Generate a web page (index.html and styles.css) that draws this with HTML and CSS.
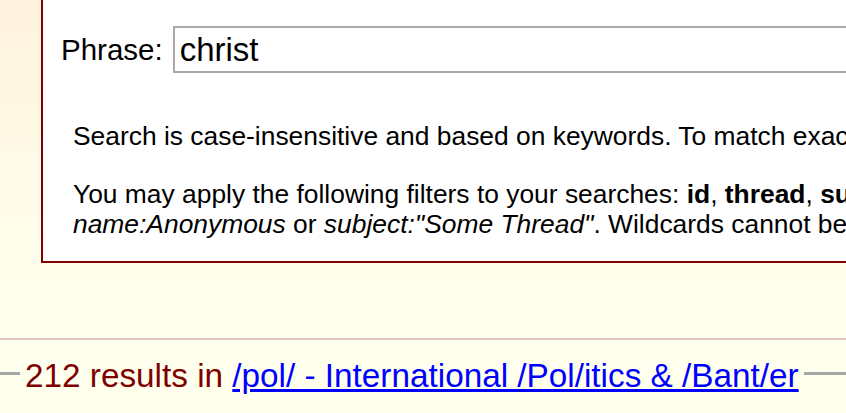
FILE: index.html
```html
<!DOCTYPE html>
<html lang="en">
<head>
<meta charset="utf-8">
<title>Search</title>
<link rel="stylesheet" href="styles.css">
</head>
<body>
<div class="page">
  <div class="search-box">
    <div class="phrase-row">
      <label class="phrase-label" for="q">Phrase:</label>
      <input class="phrase-input" id="q" type="text" value="christ">
    </div>
    <div class="help">
      <p>Search is case-insensitive and based on keywords. To match exact phrases, put them in double quotes.</p>
      <p>You may apply the following filters to your searches: <b>id</b>, <b>thread</b>, <b>subject</b>, <b>name</b>, <b>trip</b>. Example:<br><i>name:Anonymous</i> or <i>subject:"Some Thread"</i>. Wildcards cannot be used in filters.</p>
    </div>
  </div>
  <hr class="divider">
  <h2 class="results-title">
    <span class="rule rule-left"></span>
    <span class="results-text">212 results in <a href="#">/pol/ - International /Pol/itics &amp; /Bant/er</a></span>
    <span class="rule rule-right"></span>
  </h2>
</div>
</body>
</html>
```

FILE: styles.css
```css
html, body {
  margin: 0;
  padding: 0;
}

body {
  background: #ffffee linear-gradient(#fff3de 0, #fffbe9 200px, #ffffee 290px) no-repeat;
  font-family: "Liberation Sans", Arial, sans-serif;
  color: #000;
  overflow: hidden;
  height: 413px;
}

.page {
  width: 846px;
}

.search-box {
  margin: -20px 0 0 41px;
  width: 1600px;
  background: #fff;
  border: 2px solid #800000;
  padding: 44px 0 0 0;
}

.phrase-row {
  display: flex;
  align-items: center;
  gap: 10px;
  padding-left: 18px;
}

.phrase-label {
  font-size: 29.5px;
}

.phrase-input {
  font-family: "Liberation Sans", Arial, sans-serif;
  font-size: 33px;
  width: 1200px;
  height: 43px;
  box-sizing: content-box;
  padding: 0 5px;
  border: 2px solid #a9a9a9;
  background: #fff;
  color: #000;
  outline: none;
}

.help {
  padding: 48px 30px 22px 30px;
  font-size: 26.4px;
  line-height: 30px;
}

.help p {
  margin: 0;
  white-space: nowrap;
}

.help p + p {
  margin-top: 28px;
}

.divider {
  margin: 75px 0 0 0;
  height: 0;
  border: 0;
  border-top: 2px solid #dcc6bf;
}

.results-title {
  margin: 17px 0 0 0;
  display: flex;
  align-items: center;
  gap: 5px;
  font-size: 33.3px;
  font-weight: normal;
  white-space: nowrap;
}

.results-text {
  color: #800000;
}

.results-text a {
  color: #0000ff;
  text-decoration: underline;
}

.rule {
  height: 3px;
  background: #a6a6a6;
  margin-bottom: 5px;
}

.rule-left {
  flex: 0 0 20px;
}

.rule-right {
  flex: 1 1 auto;
}
```
